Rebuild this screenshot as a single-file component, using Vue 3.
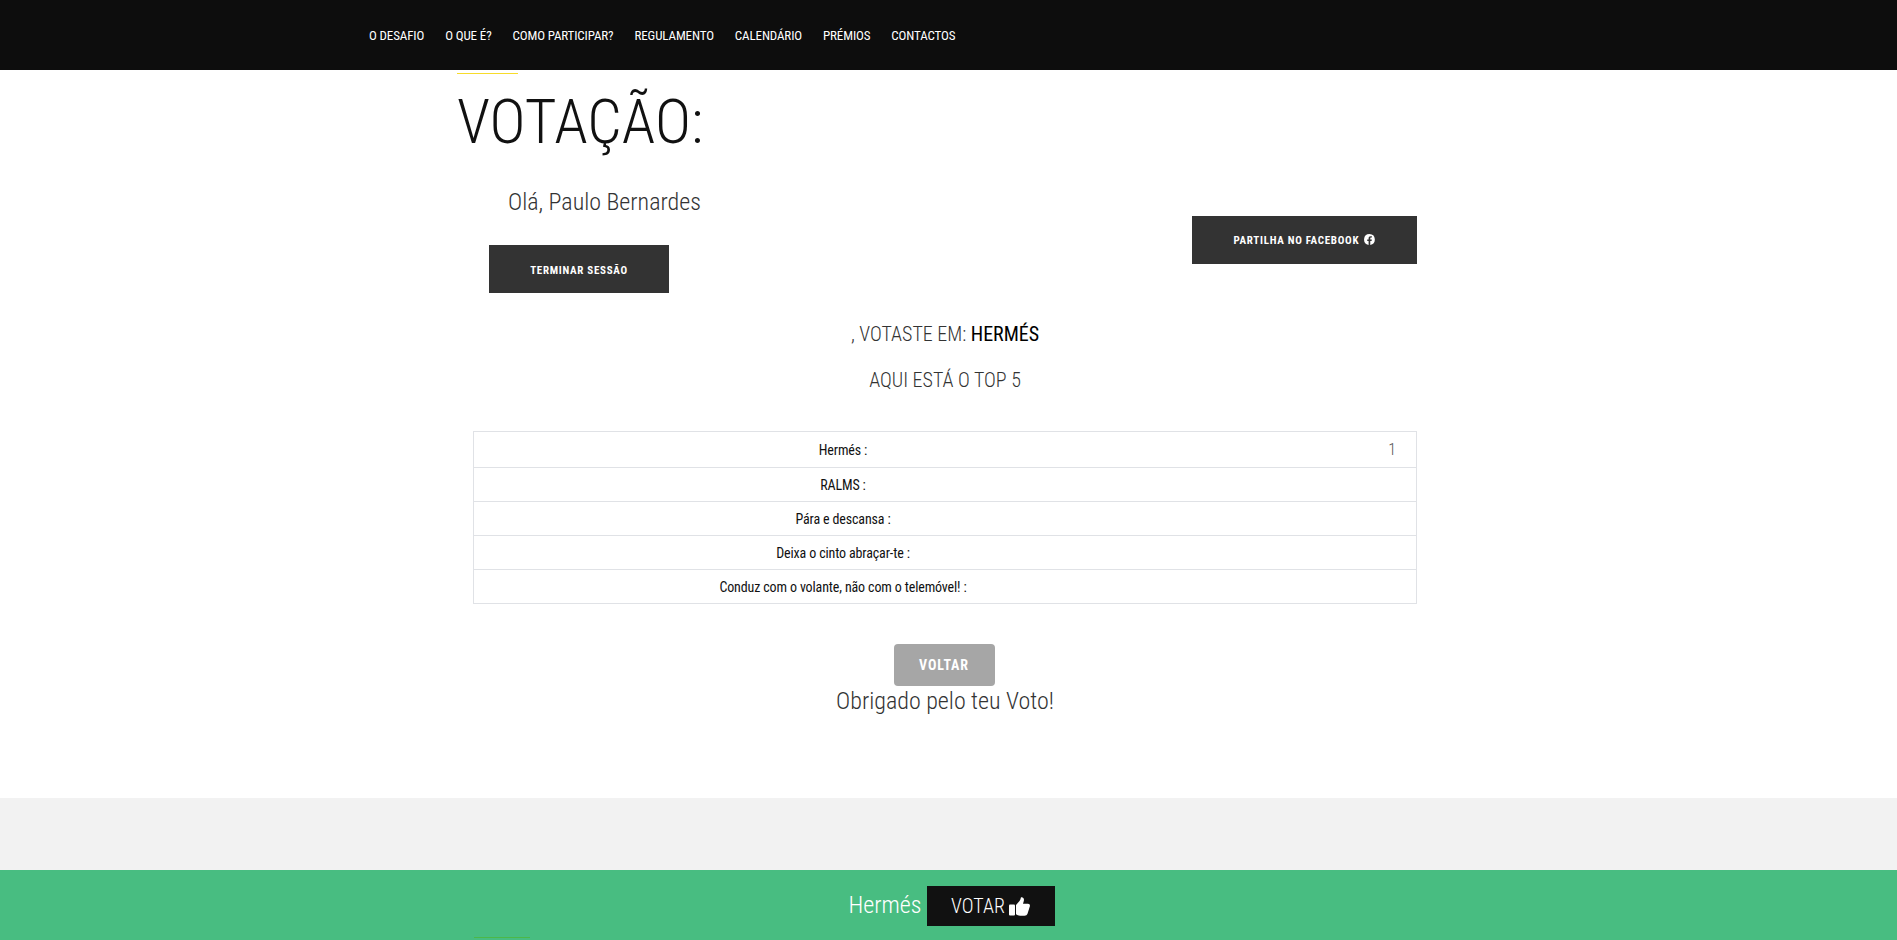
<template>
  <div class="page">
    <!-- Top navigation -->
    <nav class="top-nav">
      <a v-for="item in navItems" :key="item" class="nav-link">{{ item }}</a>
    </nav>

    <main class="vote-area">
      <div class="title-block">
        <div class="title-rule"></div>
        <h1 class="title">VOTAÇÃO:</h1>
      </div>

      <div class="session-row">
        <div class="session-left">
          <p class="greeting">Olá, Paulo Bernardes</p>
          <button class="dark-btn logout-btn">TERMINAR SESSÃO</button>
        </div>
        <button class="dark-btn share-btn">
          PARTILHA NO FACEBOOK
          <svg class="fb-icon" viewBox="0 0 24 24" width="11" height="11">
            <path fill="currentColor" d="M12 0a12 12 0 0 0-2 23.8v-8.4H7v-3.4h3V9.4c0-3 1.8-4.7 4.5-4.7 1.3 0 2.7.2 2.7.2v3h-1.500c-1.500 0-2 .9-2 1.900V12h3.400l-.5 3.400H13.700v8.400A12 12 0 0 0 12 0z" />
          </svg>
        </button>
      </div>

      <p class="voted-line">, VOTASTE EM: <strong>HERMÉS</strong></p>
      <p class="top-line">AQUI ESTÁ O TOP 5</p>

      <div class="results">
        <div v-for="row in results" :key="row.name" class="result-row">
          <span class="result-name">{{ row.name }} :</span>
          <span class="result-count">{{ row.votes }}</span>
        </div>
      </div>

      <button class="back-btn">VOLTAR</button>
      <p class="thanks">Obrigado pelo teu Voto!</p>
    </main>

    <div class="grey-band"></div>

    <!-- Sticky vote bar -->
    <footer class="vote-bar">
      <span class="vote-name">Hermés</span>
      <button class="vote-btn">
        VOTAR
        <svg class="thumb" viewBox="0 0 21 19" width="21" height="19">
          <rect fill="currentColor" x="0" y="7.500" width="6" height="11" rx="1" />
          <path fill="currentColor" d="M7 8L10.500 4C11.500 3 11.500 1.500 12 .3C14-.2 15.500 1.500 14.800 4L14 6.800H19C20.500 6.800 21.300 8 20.800 9.500L18.500 16.800C18 18 17 18.700 15.500 18.700H11C9.500 18.700 8 18 7 17.300Z" />
        </svg>
      </button>
      <div class="bar-rule"></div>
    </footer>
  </div>
</template>

<script setup>
const navItems = ['O DESAFIO', 'O QUE É?', 'COMO PARTICIPAR?', 'REGULAMENTO', 'CALENDÁRIO', 'PRÉMIOS', 'CONTACTOS'];

const results = [
  { name: 'Hermés', votes: '1' },
  { name: 'RALMS', votes: '' },
  { name: 'Pára e descansa', votes: '' },
  { name: 'Deixa o cinto abraçar-te', votes: '' },
  { name: 'Conduz com o volante, não com o telemóvel!', votes: '' },
];
</script>

<style>
html, body {
  margin: 0;
  background: #fff;
}
</style>

<style scoped>
.page {
  display: flex;
  flex-direction: column;
  height: 940px;
  overflow: hidden;
  font-family: Roboto, "Liberation Sans", sans-serif;
  font-stretch: 75%;
  color: #111;
}

.top-nav {
  display: flex;
  align-items: center;
  gap: 21px;
  height: 70px;
  flex: none;
  padding-left: 369px;
  background: #0d0d0d;
}

.nav-link {
  font-size: 13px;
  letter-spacing: -0.12px;
  color: #fff;
}

.vote-area {
  display: flex;
  flex-direction: column;
  align-items: center;
  height: 728px;
  flex: none;
  padding-right: 7px;
}

.title-block {
  align-self: flex-start;
  margin-left: 457px;
  padding-top: 3px;
}

.title-rule {
  width: 61px;
  height: 1px;
  background: #f7dc2a;
}

.title {
  margin: 11px 0 0;
  font-size: 61px;
  line-height: 75px;
  font-weight: 300;
}

.session-row {
  display: flex;
  justify-content: space-between;
  align-items: flex-start;
  width: 928px;
  margin-left: 16px;
  height: 145px;
}

.session-left {
  display: flex;
  flex-direction: column;
  align-items: flex-start;
}

.greeting {
  margin: 28px 0 0 19px;
  font-size: 24px;
  line-height: 28px;
  font-weight: 300;
  color: #333;
}

.dark-btn {
  border: 0;
  height: 48px;
  background: #333;
  color: #fff;
  font-family: inherit;
  font-stretch: inherit;
  font-size: 11px;
  font-weight: 700;
  letter-spacing: 0.7px;
}

.logout-btn {
  width: 180px;
  margin-top: 29px;
  padding-top: 3px;
}

.share-btn {
  width: 225px;
  margin-top: 56px;
}

.fb-icon {
  vertical-align: -1px;
  margin-left: 2px;
}

.voted-line,
.top-line {
  margin: 0;
  font-size: 20px;
  line-height: 24px;
  font-weight: 300;
  color: #333;
}

.voted-line strong {
  font-weight: 400;
  color: #000;
}

.voted-line {
  margin-top: 17px;
}

.top-line {
  margin-top: 22px;
}

.results {
  width: 944px;
  margin-top: 39px;
  border: 1px solid #e0e2e6;
  box-sizing: border-box;
}

.result-row {
  display: grid;
  grid-template-columns: 738px 1fr;
  align-items: center;
  height: 33px;
  border-top: 1px solid #e0e2e6;
  font-size: 14px;
  letter-spacing: -0.14px;
}

.result-row:first-child {
  height: 35px;
  border-top: 0;
}

.result-name {
  text-align: center;
}

.result-count {
  padding-right: 20px;
  text-align: right;
  font-size: 16px;
  font-weight: 300;
  color: #555;
}

.back-btn {
  width: 101px;
  height: 42px;
  margin: 40px 2px 0 0;
  border: 0;
  border-radius: 4px;
  background: #a6a6a6;
  color: #fff;
  font-family: inherit;
  font-stretch: inherit;
  font-size: 14px;
  font-weight: 700;
  letter-spacing: 0.9px;
}

.thanks {
  margin: 1px 0 0;
  font-size: 24px;
  line-height: 28px;
  font-weight: 300;
  color: #333;
}

.grey-band {
  height: 72px;
  flex: none;
  background: #f2f2f2;
}

.vote-bar {
  position: relative;
  display: flex;
  align-items: center;
  justify-content: center;
  gap: 5px;
  height: 70px;
  flex: none;
  padding-left: 6px;
  background: #48bd81;
}

.vote-name {
  font-size: 24px;
  font-weight: 300;
  color: #fff;
}

.vote-btn {
  display: flex;
  align-items: center;
  justify-content: center;
  gap: 4px;
  width: 128px;
  height: 40px;
  margin-top: 2px;
  border: 0;
  background: #111;
  color: #fff;
  font-family: inherit;
  font-stretch: inherit;
  font-size: 20px;
  font-weight: 300;
}

.bar-rule {
  position: absolute;
  left: 474px;
  bottom: 2px;
  width: 56px;
  height: 1px;
  background: #4cb849;
}
</style>
